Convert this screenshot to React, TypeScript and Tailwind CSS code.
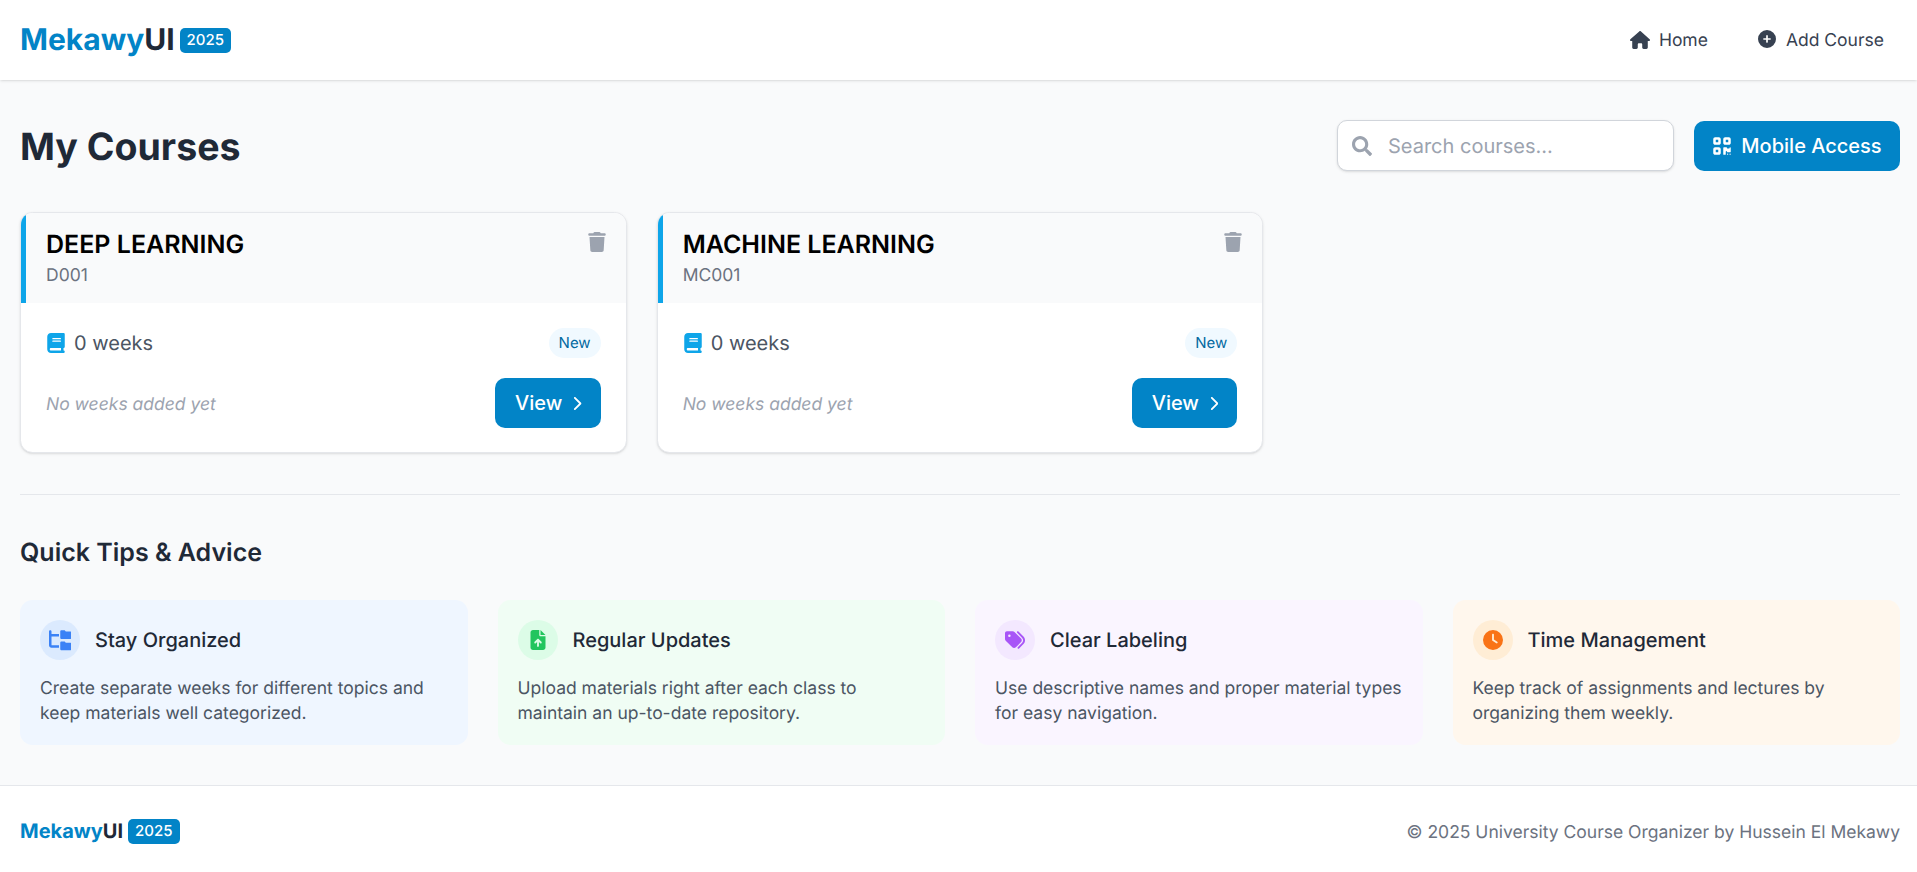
import React from "react";
import { FaSearch } from "react-icons/fa";
import { FaHouse, FaCirclePlus, FaQrcode, FaTrash, FaBook, FaChevronRight, FaFileArrowUp, FaTags, FaClock, FaFolderTree } from "react-icons/fa6";

function Logo({ small }: { small?: boolean }) {
  return (
    <div className="flex items-center">
      <span className={small ? "text-[20px] leading-[30px] font-bold text-[#0284c7]" : "text-[30px] leading-[38px] font-bold text-[#0284c7]"}>
        Mekawy<span className="text-[#1f2937]">UI</span>
      </span>
      <span className="ml-[5px] bg-[#0284c7] text-white text-[15px] leading-[20px] font-medium px-[7px] py-[2.5px] rounded-[5px]">2025</span>
    </div>
  );
}

function CourseCard({ title, code }: { title: string; code: string }) {
  return (
    <div className="bg-white rounded-[12.5px] border border-[#e5e7eb] shadow-sm overflow-hidden">
      <div className="relative bg-[#f9fafb] border-l-[5px] border-[#0ea5e9] h-[90px] pl-5 pr-5 pt-[15px]">
        <h3 className="text-[25px] leading-[35px] font-semibold text-black">{title}</h3>
        <p className="text-[17.5px] leading-[25px] text-[#6b7280]">{code}</p>
        <FaTrash className="absolute right-[19px] top-[19px] text-[#9ca3af] text-[20px]" />
      </div>
      <div className="p-[25px] pb-[24px]">
        <div className="flex items-center justify-between h-[30px]">
          <div className="flex items-center">
            <FaBook className="text-[#0ea5e9] text-[20px] mr-[8px]" />
            <span className="text-[20px] leading-[30px] text-[#4b5563]">0 weeks</span>
          </div>
          <span className="bg-[#f0f9ff] text-[#0369a1] text-[15px] leading-[20px] px-[10px] py-[5px] rounded-full">New</span>
        </div>
        <div className="flex items-center justify-between mt-[20px]">
          <span className="text-[17.5px] leading-[25px] italic text-[#9ca3af] mt-[2px]">No weeks added yet</span>
          <button className="flex items-center bg-[#0284c7] text-white text-[20px] leading-[30px] font-medium pl-5 pr-[19px] h-[50px] rounded-[10px]">
            View <FaChevronRight className="ml-[10px] w-[9.4px] text-[15px]" />
          </button>
        </div>
      </div>
    </div>
  );
}

const tips = [
  { t: "Stay Organized", l1: "Create separate weeks for different topics and", l2: "keep materials well categorized.", bg: "bg-[#eff6ff]", c: "bg-[#dbeafe] text-[#3b82f6]", I: FaFolderTree, s: "text-[22.5px]" },
  { t: "Regular Updates", l1: "Upload materials right after each class to", l2: "maintain an up-to-date repository.", bg: "bg-[#f0fdf4]", c: "bg-[#dcfce7] text-[#22c55e]", I: FaFileArrowUp, s: "text-[20px]" },
  { t: "Clear Labeling", l1: "Use descriptive names and proper material types", l2: "for easy navigation.", bg: "bg-[#faf5ff]", c: "bg-[#f3e8ff] text-[#a855f7]", I: FaTags, s: "text-[20px]" },
  { t: "Time Management", l1: "Keep track of assignments and lectures by", l2: "organizing them weekly.", bg: "bg-[#fff7ed]", c: "bg-[#ffedd5] text-[#f97316]", I: FaClock, s: "text-[20px]" },
];

export default function App() {
  return (
    <div className="h-[872px] overflow-hidden bg-[#f9fafb] flex flex-col font-['Inter',sans-serif] [text-rendering:geometricPrecision]">
      <header className="bg-white h-[80px] shrink-0 shadow-sm flex items-center justify-between pl-5 pr-[17px]">
        <Logo />
        <nav className="flex items-center gap-[50px] pr-[16px] mt-[2px]">
          <a className="flex items-center text-[17.5px] text-[#374151]"><FaHouse className="text-[#374151] text-[20px] mr-[9px] -mt-[3px]" />Home</a>
          <a className="flex items-center text-[17.5px] text-[#374151]"><FaCirclePlus className="text-[#374151] text-[18px] mr-[10px] -mt-[4px]" />Add Course</a>
        </nav>
      </header>

      <main className="flex-1 pl-5 pr-[17px]">
        <div className="flex items-center justify-between pt-[40px]">
          <h1 className="text-[37.5px] leading-[45px] font-bold text-[#1f2937] mt-[4px]">My Courses</h1>
          <div className="flex items-center gap-[20px]">
            <div className="flex items-center w-[337px] h-[51px] bg-white border border-[#d1d5db] rounded-[10px] shadow-sm pl-[14px]">
              <FaSearch className="text-[#9ca3af] text-[20px] mr-[16px]" />
              <span className="text-[20px] text-[#9ca3af]">Search courses...</span>
            </div>
            <button className="flex items-center justify-center w-[206px] h-[50px] bg-[#0284c7] text-white text-[20px] font-medium rounded-[10px]">
              <FaQrcode className="text-[20px] mr-[9px]" />Mobile Access
            </button>
          </div>
        </div>

        <div className="grid grid-cols-3 gap-[30px] mt-[41px]">
          <CourseCard title="DEEP LEARNING" code="D001" />
          <CourseCard title="MACHINE LEARNING" code="MC001" />
        </div>

        <div className="border-t border-[#e5e7eb] mt-[41px] pt-[41px]">
          <h2 className="text-[25px] leading-[35px] font-semibold text-[#1f2937]">Quick Tips &amp; Advice</h2>
          <div className="grid grid-cols-4 gap-[30px] mt-[29px]">
            {tips.map(({ t, l1, l2, bg, c, I, s }) => (
              <div key={t} className={`${bg} rounded-[12.5px] px-5 pt-5 pb-[19px]`}>
                <div className="flex items-center">
                  <div className={`${c} w-10 h-10 rounded-full flex items-center justify-center mr-[15px]`}>
                    <I className={s} />
                  </div>
                  <h3 className="text-[20px] leading-[30px] font-medium text-[#1f2937]">{t}</h3>
                </div>
                <p className="text-[17.5px] leading-[25px] text-[#4b5563] mt-[16px]">{l1}<br />{l2}</p>
              </div>
            ))}
          </div>
        </div>
      </main>

      <footer className="bg-white border-t border-[#e5e7eb] h-[87px] shrink-0 flex items-start justify-between pt-[30px] pl-5 pr-[17px]">
        <Logo small />
        <span className="text-[17.5px] leading-[30px] text-[#6b7280] mt-[2px]">© 2025 University Course Organizer by Hussein El Mekawy</span>
      </footer>
    </div>
  );
}
